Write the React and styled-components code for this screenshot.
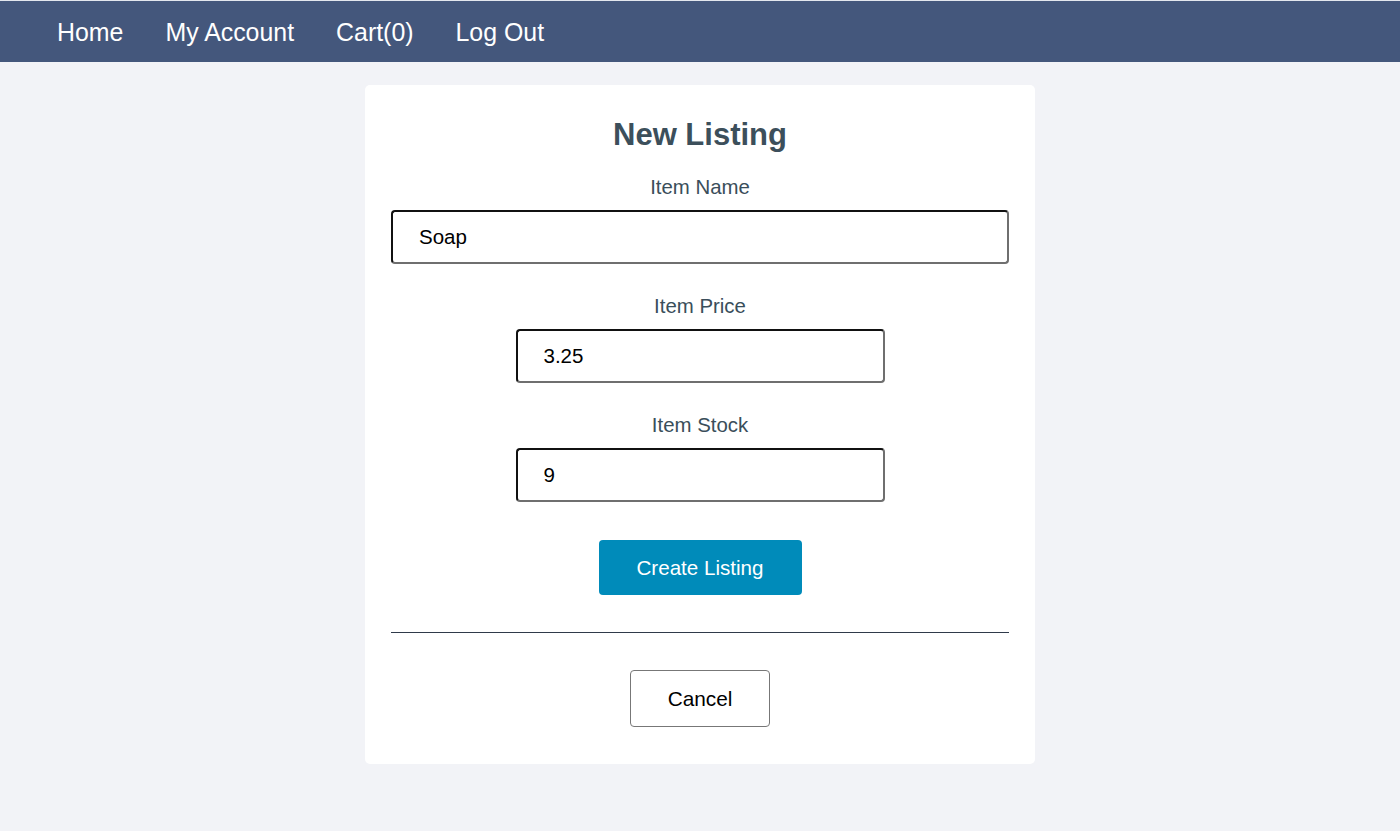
import React from "react";
import styled, { createGlobalStyle } from "styled-components";

const Global = createGlobalStyle`
  html, body { margin: 0; padding: 0; background: #f2f3f7; }
  body { font-family: "Liberation Sans", Arial, Helvetica, sans-serif; }
  * { box-sizing: border-box; }
`;

const Nav = styled.nav`
  display: flex;
  align-items: center;
  gap: 42px;
  height: 62px;
  padding-left: 57px;
  padding-top: 2px;
  background: #44577c;
  border-top: 1px solid #e4e7ee;
`;

const NavLink = styled.a`
  color: #ffffff;
  font-size: 24.9px;
  text-decoration: none;
  line-height: 1;
  cursor: pointer;
`;

const Card = styled.main`
  width: 670px;
  margin: 23px auto 0;
  background: #ffffff;
  border-radius: 5px;
  padding: 32px 26px 37px;
  display: flex;
  flex-direction: column;
  align-items: center;
`;

const Title = styled.h1`
  margin: 0;
  font-size: 31px;
  line-height: 36px;
  font-weight: 700;
  color: #3c4f5b;
`;

const Field = styled.div`
  display: flex;
  flex-direction: column;
  align-items: center;
  width: ${(p) => p.$width};
  margin-top: ${(p) => p.$top};
`;

const Label = styled.label`
  font-size: 20.4px;
  line-height: 24px;
  color: #3a4e5a;
  margin-bottom: 11px;
`;

const Input = styled.input`
  width: 100%;
  height: 54px;
  border-style: solid;
  border-width: 2px;
  border-color: #111 #6f6f6f #6f6f6f #111;
  border-radius: 4px;
  padding: 0 0 0 26px;
  font-family: inherit;
  font-size: 20.5px;
  color: #000;
  background: #fff;
  outline: none;
`;

const Primary = styled.button`
  margin-top: 38px;
  width: 203px;
  height: 55px;
  border: none;
  border-radius: 4px;
  background: #008bba;
  color: #ffffff;
  font-family: inherit;
  font-size: 20.6px;
  cursor: pointer;
`;

const Rule = styled.hr`
  width: 100%;
  margin: 37px 0 0;
  border: none;
  border-top: 1px solid #2f3a4a;
  height: 0;
`;

const Secondary = styled.button`
  margin-top: 37px;
  width: 140px;
  height: 57px;
  border: 1px solid #777;
  border-radius: 4px;
  background: #ffffff;
  color: #000;
  font-family: inherit;
  font-size: 20.8px;
  cursor: pointer;
`;

export default function App() {
  return (
    <>
      <Global />
      <Nav>
        <NavLink>Home</NavLink>
        <NavLink>My Account</NavLink>
        <NavLink>Cart(0)</NavLink>
        <NavLink>Log Out</NavLink>
      </Nav>
      <Card>
        <Title>New Listing</Title>
        <Field $width="100%" $top="22px">
          <Label>Item Name</Label>
          <Input defaultValue="Soap" />
        </Field>
        <Field $width="369px" $top="30px">
          <Label>Item Price</Label>
          <Input defaultValue="3.25" />
        </Field>
        <Field $width="369px" $top="30px">
          <Label>Item Stock</Label>
          <Input defaultValue="9" />
        </Field>
        <Primary>Create Listing</Primary>
        <Rule />
        <Secondary>Cancel</Secondary>
      </Card>
    </>
  );
}
